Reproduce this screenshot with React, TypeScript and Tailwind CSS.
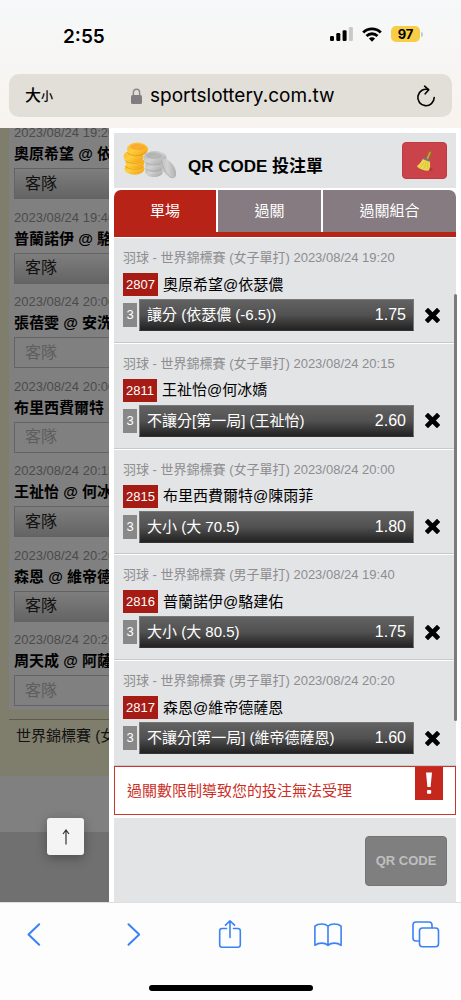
import type { ReactNode } from "react";

type Bet = {
  meta: string;
  code: string;
  match: string;
  pick: string;
  odds: string;
};

const bets: Bet[] = [
  { meta: "羽球 - 世界錦標賽 (女子單打) 2023/08/24 19:20", code: "2807", match: "奧原希望@依瑟儂", pick: "讓分 (依瑟儂 (-6.5))", odds: "1.75" },
  { meta: "羽球 - 世界錦標賽 (女子單打) 2023/08/24 20:15", code: "2811", match: "王祉怡@何冰嬌", pick: "不讓分[第一局] (王祉怡)", odds: "2.60" },
  { meta: "羽球 - 世界錦標賽 (女子單打) 2023/08/24 20:00", code: "2815", match: "布里西費爾特@陳雨菲", pick: "大小 (大 70.5)", odds: "1.80" },
  { meta: "羽球 - 世界錦標賽 (男子單打) 2023/08/24 19:40", code: "2816", match: "普蘭諾伊@駱建佑", pick: "大小 (大 80.5)", odds: "1.75" },
  { meta: "羽球 - 世界錦標賽 (男子單打) 2023/08/24 20:20", code: "2817", match: "森恩@維帝德薩恩", pick: "不讓分[第一局] (維帝德薩恩)", odds: "1.60" },
];

const games = [
  { time: "2023/08/24 19:20", name: "奧原希望 @ 依瑟儂", open: true },
  { time: "2023/08/24 19:40", name: "普蘭諾伊 @ 駱建佑", open: true },
  { time: "2023/08/24 20:00", name: "張蓓雯 @ 安洗瑩", open: false },
  { time: "2023/08/24 20:00", name: "布里西費爾特 @ 陳雨菲", open: false },
  { time: "2023/08/24 20:15", name: "王祉怡 @ 何冰嬌", open: true },
  { time: "2023/08/24 20:20", name: "森恩 @ 維帝德薩恩", open: true },
  { time: "2023/08/24 20:20", name: "周天成 @ 阿薩蘭卡", open: false },
];

function StatusBar() {
  return (
    <div className="flex h-[74px] items-center justify-between pr-[38px] pl-[63px]">
      <span className="text-[19px] leading-6 font-semibold">2:55</span>
      <div className="flex items-center gap-[9px] pb-[6px]">
        <svg className="h-[14px] w-[23px]" viewBox="0 0 23 14" aria-hidden="true">
          <rect x="0" y="9" width="4" height="5" rx="1.2" />
          <rect x="6.3" y="6" width="4" height="8" rx="1.2" />
          <rect x="12.6" y="3.3" width="4" height="10.7" rx="1.2" />
          <rect x="18.9" y="0" width="4" height="14" rx="1.2" fill="#c9c9c8" />
        </svg>
        <svg className="h-[15px] w-[20px]" viewBox="0 0 20 15" aria-hidden="true">
          <g fill="none" stroke="#000" strokeWidth="2.8">
            <path d="M1.2 5.5a12.5 12.5 0 0 1 17.6 0" />
            <path d="M4.5 9a7.8 7.8 0 0 1 11 0" />
          </g>
          <path d="M10 14.8 6.9 11.6a4.4 4.4 0 0 1 6.2 0z" />
        </svg>
        <div className="flex items-center gap-px">
          <span className="flex h-4 w-[29px] items-center justify-center rounded-[5px] bg-[#f7cd45] text-[13px] leading-4 font-bold">97</span>
          <span className="h-[5px] w-[2px] rounded-r-full bg-[#c9c9c8]" />
        </div>
      </div>
    </div>
  );
}

function AddressBar() {
  return (
    <div className="mx-[9px] mb-[11px] flex h-[43px] items-center justify-between rounded-[10px] bg-[#e2ded8] px-4">
      <button type="button" className="flex w-[30px] items-baseline font-medium">
        <span className="text-[16px] leading-5">大</span>
        <span className="text-[12px] leading-5">小</span>
      </button>
      <label className="flex items-center gap-2">
        <svg className="h-4 w-[11px]" viewBox="0 0 11 16" aria-hidden="true">
          <path d="M2.4 8V4.3a3.1 3.1 0 0 1 6.2 0V8" fill="none" stroke="#88868a" strokeWidth="1.4" />
          <rect x="0" y="7" width="11" height="9" rx="1.5" fill="#7f7d80" />
        </svg>
        <input
          aria-label="網址"
          type="text"
          defaultValue="sportslottery.com.tw"
          className="w-[190px] bg-transparent text-[19px] leading-6 outline-none"
        />
      </label>
      <button type="button" aria-label="重新整理">
        <svg className="h-[22px] w-[20px]" viewBox="0 0 20 22" fill="none" stroke="#000" strokeWidth="1.6" strokeLinecap="round" strokeLinejoin="round">
          <path d="M18.2 12.6A8.2 8.2 0 1 1 12.2 4.6" />
          <path d="M8.600 1.2l4.200 3.600-3.600 4" />
        </svg>
      </button>
    </div>
  );
}

function GameList() {
  return (
    <aside className="relative flex w-[109px] shrink-0 flex-col overflow-hidden bg-[#808080]">
      <div className="flex min-h-0 flex-1 border-l-[9px] border-[#7f7d6b]">
        <ul className="-mt-[3px] flex w-full flex-col justify-between pb-1 pl-[5px] whitespace-nowrap">
          {games.map((game) => (
            <li key={game.name}>
              <p className="text-[13px] leading-4 text-[#4b4b4b]">{game.time}</p>
              <p className="pt-px pb-[2px] text-[15px] leading-6 font-bold">{game.name}</p>
              <button
                type="button"
                className={
                  game.open
                    ? "block h-[31px] w-[200px] border border-[#636363] bg-linear-to-b from-[#7e7e7e] to-[#646464] pl-[10px] text-left text-[16px] leading-6 text-[#111]"
                    : "block h-[31px] w-[200px] border border-[#636363] pl-[10px] text-left text-[16px] leading-6 text-[#5e5e5e]"
                }
              >
                客隊
              </button>
            </li>
          ))}
        </ul>
      </div>
      <div className="h-[66px] bg-[#7f7d6b] pt-[9px] pl-[9px]">
        <p className="border-t border-[#5c5b52] pt-1 pl-[7px] text-[15px] leading-6 whitespace-nowrap text-[#111]">世界錦標賽 (女子單打)</p>
      </div>
      <div className="h-14" />
      <div className="h-[70px] bg-[#707070]" />
      <button
        type="button"
        aria-label="回到頂端"
        className="absolute bottom-[47px] left-[47px] flex size-[37px] items-center justify-center rounded-[3px] bg-[#f4f4f4] shadow-[0_3px_12px_rgba(0,0,0,0.3)]"
      >
        <svg className="h-4 w-2" viewBox="0 0 8 16" fill="none" stroke="#333" strokeWidth="1.2">
          <path d="M4 15.5V1.5M1 5l3-4 3 4" />
        </svg>
      </button>
    </aside>
  );
}

function Coins() {
  return (
    <svg className="h-[38px] w-[53px]" viewBox="0 0 53 38" aria-hidden="true">
      <defs>
        <linearGradient id="gold" x1="0" y1="0" x2="1" y2="1">
          <stop offset="0" stopColor="#fcb42c" />
          <stop offset="0.45" stopColor="#fdcf3c" />
          <stop offset="1" stopColor="#f0990f" />
        </linearGradient>
        <linearGradient id="silver" x1="0" y1="0" x2="1" y2="1">
          <stop offset="0" stopColor="#b4b4b4" />
          <stop offset="0.45" stopColor="#d2d2d2" />
          <stop offset="1" stopColor="#a2a2a2" />
        </linearGradient>
      </defs>
      <g fill="url(#gold)">
        <ellipse cx="11.5" cy="26.5" rx="10" ry="6.2" />
        <ellipse cx="12" cy="20.5" rx="9.500" ry="6" />
        <ellipse cx="10.500" cy="14.500" rx="10" ry="6.200" />
        <ellipse cx="14.500" cy="7.200" rx="10.500" ry="6.800" />
      </g>
      <ellipse cx="15" cy="5" rx="7.500" ry="3.200" fill="#f8a02c" opacity="0.7" />
      <g fill="none" stroke="#d98a10" strokeWidth="0.8" opacity="0.7">
        <path d="M4.500 10.500c3 4 12 5 18.500 0" />
        <path d="M1.500 18c4 4 13 5 19 .5" />
        <path d="M2.500 24.500c4 3.500 13 4 18 0" />
      </g>
      <g fill="url(#silver)">
        <ellipse cx="31" cy="29.500" rx="9" ry="5.500" />
        <ellipse cx="31.500" cy="23.500" rx="9.500" ry="6.500" />
        <ellipse cx="32" cy="16" rx="11.500" ry="7" />
        <ellipse cx="45.500" cy="26.500" rx="5.800" ry="11" transform="rotate(-33 45.500 26.500)" />
      </g>
      <ellipse cx="31" cy="13.800" rx="8" ry="3.200" fill="#a6a6a6" opacity="0.6" />
      <g fill="none" stroke="#999" strokeWidth="0.7" opacity="0.7">
        <path d="M21.500 19.500c4 4 11 4.500 16.500 2.500" />
        <path d="M22.500 26.500c4 3 10 3.500 16 1.500" />
        <path d="M38.800 18.500c.2 6 4 14 10.500 17.500" />
      </g>
    </svg>
  );
}

function Broom() {
  return (
    <svg className="h-[22px] w-[18px]" viewBox="0 0 18 22" aria-hidden="true">
      <ellipse cx="11" cy="19.3" rx="6" ry="1.6" fill="#9c2830" opacity="0.6" />
      <path d="M11.3 9.500 14 2.500" stroke="#9c6a24" strokeWidth="4" strokeLinecap="round" />
      <path d="M11.3 9 13.9 2.600" stroke="#d39a4c" strokeWidth="1.600" strokeLinecap="round" />
      <path d="M7.300 8.200 13.600 10.800c1 3.200.6 6.600-.6 9.800C8.400 21 4 19.400.8 16.200c2.600-2.200 4.800-4.800 6.500-8z" fill="#ecd84c" />
      <path d="m8.500 11.500-4 6M10.300 12l-2.500 7M12 12.500l-.8 7" stroke="#c9b236" strokeWidth="0.600" fill="none" />
      <path d="M7.300 8.300 13.600 10.900" stroke="#75708c" strokeWidth="2" />
    </svg>
  );
}

function BetRow({ bet }: { bet: Bet }) {
  return (
    <li className="border-t border-b border-t-white border-b-[#c9c9cb] pt-3 pl-[9px]">
      <p className="text-[13px] leading-4 text-[#8d8d8f]">{bet.meta}</p>
      <div className="mt-[7px] flex items-center gap-[5px]">
        <span className="bg-[#a61c14] px-[3px] text-[13px] leading-[23px] text-white">{bet.code}</span>
        <span className="text-[15px] leading-5">{bet.match}</span>
      </div>
      <div className="mt-[3px] flex items-center pr-4">
        <span className="w-[14px] bg-[#888888] text-center text-[13px] leading-6 text-white">3</span>
        <div className="ml-[2px] flex h-8 flex-1 items-center justify-between border border-[#777] border-b-[#333] bg-linear-to-b from-[#626262] via-[#515151] to-[#222222] px-[7px] text-white">
          <span className="text-[15px] leading-6">{bet.pick}</span>
          <span className="text-[16px] leading-6">{bet.odds}</span>
        </div>
        <button type="button" aria-label={`移除 ${bet.code}`} className="ml-[11px]">
          <svg className="size-[15px]" viewBox="0 0 15 15" aria-hidden="true">
            <path d="M3 3l9 9M12 3l-9 9" stroke="#000" strokeWidth="4.600" strokeLinecap="square" />
          </svg>
        </button>
      </div>
    </li>
  );
}

function BetSlip() {
  return (
    <section className="relative flex min-w-0 flex-1 flex-col bg-white px-[5px] pt-[5px]">
      <header className="flex h-[55px] items-start justify-between bg-[#e3e4e6] px-[9px] pt-[9px]">
        <div className="flex items-start gap-3">
          <Coins />
          <h1 className="pt-[13px] text-[17px] leading-6 font-bold">QR CODE 投注單</h1>
        </div>
        <button type="button" aria-label="清除投注單" className="flex h-[37px] w-[45px] items-center justify-center rounded-[4px] border border-[#c03a42] bg-[#ca434b]">
          <Broom />
        </button>
      </header>

      <nav className="mt-[2px] flex gap-[2px] overflow-hidden rounded-t-[7px] border-b-[5px] border-[#b82318] text-[15px] leading-[42px] text-white">
        <button type="button" className="flex-[102] bg-[#b82318]">單場</button>
        <button type="button" className="flex-[103] bg-[#867b80]">過關</button>
        <button type="button" className="flex-[133] bg-[#867b80]">過關組合</button>
      </nav>

      <ul className="grid min-h-0 flex-1 auto-rows-fr bg-[#e3e4e6]">
        {bets.map((bet) => (
          <BetRow key={bet.code} bet={bet} />
        ))}
      </ul>

      <div role="alert" className="flex items-start justify-between border border-[#cc352c] px-3 text-[#cc2f26]">
        <p className="text-[15px] leading-[47px]">過關數限制導致您的投注無法受理</p>
        <svg className="h-[33px] w-[28px]" viewBox="0 0 28 33" aria-hidden="true">
          <rect width="28" height="33" fill="#c4271c" />
          <path d="M11 5.500h6l-1.400 14.500h-3.200z" fill="#fff" />
          <rect x="12" y="23" width="4.200" height="3.800" rx="0.8" fill="#fff" />
        </svg>
      </div>

      <footer className="mt-[3px] flex h-[84px] items-start justify-end bg-[#e3e4e6] pt-[18px] pr-[9px]">
        <button type="button" disabled className="h-[50px] w-[82px] rounded-[4px] border border-[#747474] bg-[#7f7f7f] text-[13px] leading-5 font-bold text-[#bfbfbf]">
          QR CODE
        </button>
      </footer>

      {/* scroll thumb */}
      <div className="absolute top-[166px] right-1 h-[427px] w-[3px] rounded-full bg-[#7b7b7c]" />
    </section>
  );
}

function ToolButton({ label, children }: { label: string; children: ReactNode }) {
  return (
    <button type="button" aria-label={label}>
      <svg className="size-7" viewBox="0 0 28 28" fill="none" stroke="#3a82f7" strokeWidth="1.6" strokeLinecap="round" strokeLinejoin="round">
        {children}
      </svg>
    </button>
  );
}

function Toolbar() {
  return (
    <footer className="flex h-[98px] flex-col items-center justify-between border-t border-[#dededf] bg-[#fdfdfd] pt-[17px] pb-[9px]">
      <nav className="flex w-full items-center justify-between pr-[21px] pl-5">
        <ToolButton label="上一頁">
          <path d="M19.200 4.200 8.500 14.500 19.200 24.800" strokeWidth="2" />
        </ToolButton>
        <ToolButton label="下一頁">
          <path d="M10.500 4.200 21.200 14.500 10.500 24.800" strokeWidth="2" />
        </ToolButton>
        <ToolButton label="分享">
          <path d="M10.500 8.500H6a2.300 2.300 0 0 0-2.300 2.300V25A2.300 2.300 0 0 0 6 27.200h16A2.300 2.300 0 0 0 24.300 25V10.800A2.300 2.300 0 0 0 22 8.500h-4.500" />
          <path d="M14 17.500V.9M9.500 5.200 14 .9l4.500 4.300" />
        </ToolButton>
        <ToolButton label="書籤">
          <path d="M14 6.200C12.500 4.600 10.300 4 7.700 4S2.500 4.700.9 6.200V25.300c1.800-1.500 4-2.200 6.800-2.200s4.700.700 6.300 2.200c1.600-1.500 3.500-2.200 6.300-2.200s5 .7 6.800 2.200V6.200C25.500 4.700 22.900 4 20.300 4S15.500 4.600 14 6.200zM14 6.200V25.300" />
        </ToolButton>
        <ToolButton label="分頁">
          <path d="M7 21H4a3 3 0 0 1-3-3V5a3 3 0 0 1 3-3h13a3 3 0 0 1 3 3v2.600" />
          <rect x="7.500" y="8" width="19" height="18.800" rx="3" />
        </ToolButton>
      </nav>
      <div className="h-[6px] w-[164px] rounded-full bg-black" />
    </footer>
  );
}

export default function App() {
  return (
    <div className="flex h-screen min-h-[900px] flex-col overflow-hidden bg-white font-['Liberation_Sans','Noto_Sans_CJK_TC',sans-serif] text-black">
      <header className="bg-linear-to-b from-[#f6f8f9] to-[#f8f3ee] font-['Inter','Noto_Sans_CJK_TC',sans-serif]">
        <StatusBar />
        <AddressBar />
      </header>
      <main className="flex min-h-0 flex-1">
        <GameList />
        <BetSlip />
      </main>
      <Toolbar />
    </div>
  );
}
